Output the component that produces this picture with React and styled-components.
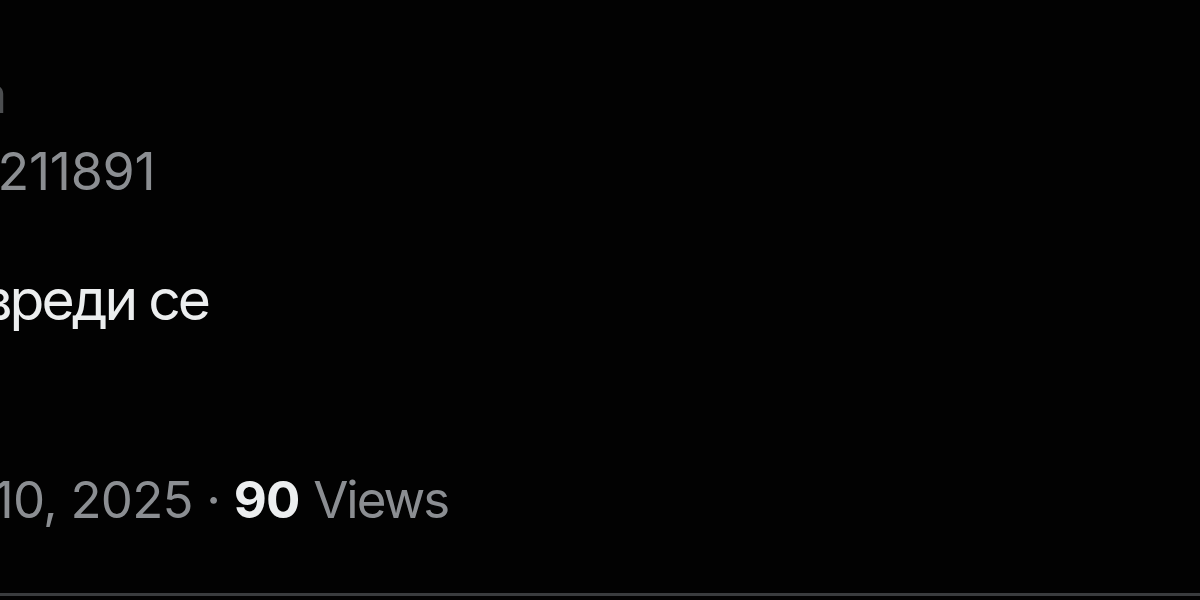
import React from "react";
import styled, { createGlobalStyle } from "styled-components";

const GlobalStyle = createGlobalStyle`
  html, body {
    margin: 0;
    padding: 0;
    background: #020202;
    overflow: hidden;
  }
`;

const Page = styled.div`
  width: 1200px;
  height: 600px;
  background: #020202;
  overflow: hidden;
  display: flex;
  flex-direction: column;
  font-family: Inter, "Noto Sans", "Liberation Sans", sans-serif;
`;

const Tweet = styled.article`
  display: flex;
  flex-direction: column;
  flex: 1;
`;

const Name = styled.div`
  margin: 61px 0 0 -162px;
  font-size: 54px;
  line-height: 65px;
  font-weight: 700;
  color: #4c4e50;
  white-space: nowrap;
`;

const Handle = styled.div`
  margin: 15px 0 0 -205px;
  font-size: 52px;
  line-height: 62px;
  letter-spacing: -0.3px;
  color: #8b8e92;
  white-space: nowrap;
`;

const Body = styled.p`
  margin: 62px 0 0 -160px;
  font-size: 57px;
  line-height: 70px;
  letter-spacing: -3px;
  color: #eceeef;
  white-space: nowrap;
`;

const Meta = styled.div`
  margin: 134px 0 0 -112px;
  font-size: 51px;
  line-height: 62px;
  letter-spacing: -0.8px;
  color: #8b8e92;
  white-space: nowrap;
`;

const Views = styled.span`
  letter-spacing: -2px;
`;

const Count = styled.span`
  color: #eceeef;
  font-weight: 700;
`;

const Divider = styled.hr`
  margin: auto 0 4px;
  border: none;
  height: 3px;
  background: #3a3c3e;
`;

export default function App() {
  return (
    <>
      <GlobalStyle />
      <Page>
        <Tweet>
          <Name>Ивана</Name>
          <Handle>@ivana_211891</Handle>
          <Body>Ипак вреди се</Body>
          <Meta>
            Mar 10, 2025 · <Count>90</Count> <Views>Views</Views>
          </Meta>
        </Tweet>
        <Divider />
      </Page>
    </>
  );
}
